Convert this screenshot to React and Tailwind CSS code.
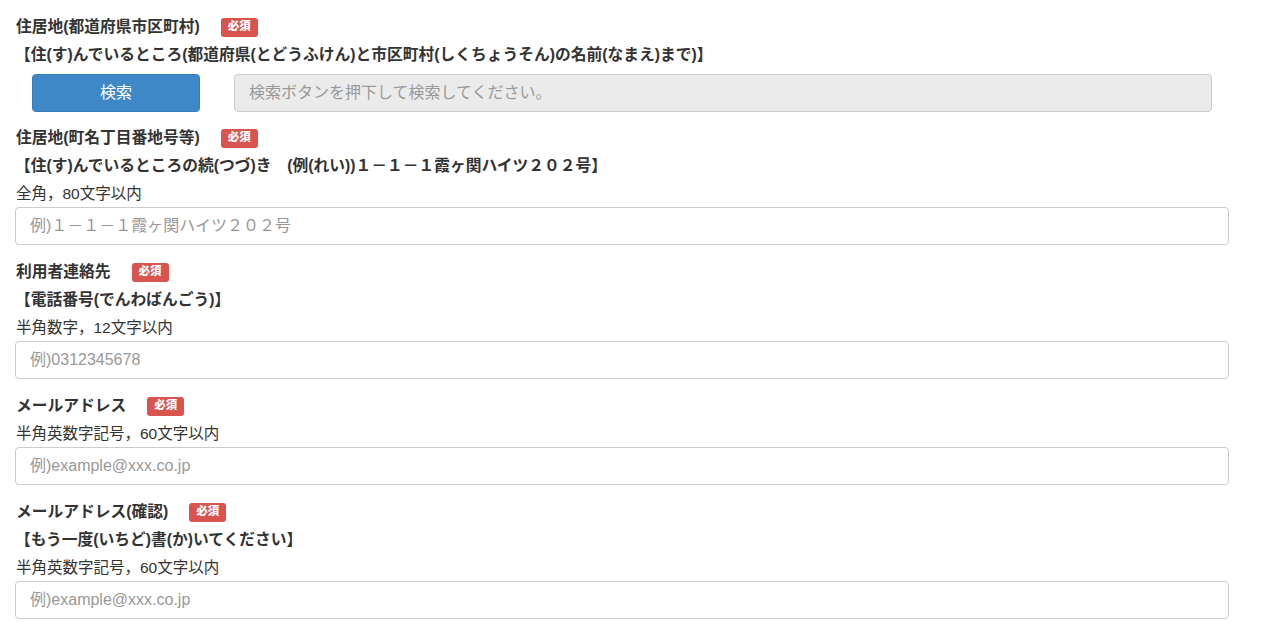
import React from 'react';

// 入力フォーム（住所・連絡先）
const font = { fontFamily: '"Liberation Sans", "Noto Sans CJK JP", sans-serif' };

const Badge = () => (
    <span className="ml-[21px] inline-flex h-[19px] w-[37px] items-center justify-center rounded-[3px] bg-[#d9534f] text-[11.5px] font-black leading-none text-white">
        必須
    </span>
);

const Label = ({ children }) => (
    <div className="flex h-7 items-center pl-px">
        <span className="text-[15.75px] font-bold text-[#333]">{children}</span>
        <Badge />
    </div>
);

const Note = ({ children }) => (
    <div className="flex h-7 items-center text-[15.75px] font-bold text-[#333]">{children}</div>
);

const Hint = ({ children }) => (
    <div className="flex h-[27px] items-center pl-px text-[15.5px] text-[#333]">{children}</div>
);

const TextInput = ({ placeholder }) => (
    <input
        type="text"
        placeholder={placeholder}
        className="h-[38px] w-[1214px] rounded-[4px] border border-[#cccccc] bg-white px-[14px] text-[16px] text-[#555] placeholder:text-[#999] outline-none"
    />
);

const fields = [
    {
        label: '住居地(町名丁目番地号等)',
        note: '【住(す)んでいるところの続(つづ)き　(例(れい))１－１－１霞ヶ関ハイツ２０２号】',
        hint: '全角，80文字以内',
        placeholder: '例)１－１－１霞ヶ関ハイツ２０２号'
    },
    {
        label: '利用者連絡先',
        note: '【電話番号(でんわばんごう)】',
        hint: '半角数字，12文字以内',
        placeholder: '例)0312345678'
    },
    {
        label: 'メールアドレス',
        hint: '半角英数字記号，60文字以内',
        placeholder: '例)example@xxx.co.jp'
    },
    {
        label: 'メールアドレス(確認)',
        note: '【もう一度(いちど)書(か)いてください】',
        hint: '半角英数字記号，60文字以内',
        placeholder: '例)example@xxx.co.jp'
    }
];

export default function App() {
    return (
        <div className="min-h-screen bg-white px-[15px] pt-[13px]" style={font}>
            {/* 住居地(都道府県市区町村) */}
            <div className="mb-[12px]">
                <Label>住居地(都道府県市区町村)</Label>
                <Note>【住(す)んでいるところ(都道府県(とどうふけん)と市区町村(しくちょうそん)の名前(なまえ)まで)】</Note>
                <div className="mt-[5px] flex items-center gap-[34px] pl-[17px]">
                    <button className="h-[38px] w-[168px] rounded-[4px] border border-[#357ebd] bg-[#3f88c8] text-[16px] text-white">
                        検索
                    </button>
                    <input
                        type="text"
                        disabled
                        placeholder="検索ボタンを押下して検索してください。"
                        className="h-[38px] w-[978px] rounded-[4px] border border-[#cccccc] bg-[#ebebeb] px-[14px] text-[16px] placeholder:text-[#999]"
                    />
                </div>
            </div>

            {fields.map((f) => (
                <div key={f.label} className="mb-[13px]">
                    <Label>{f.label}</Label>
                    {f.note && <Note>{f.note}</Note>}
                    <Hint>{f.hint}</Hint>
                    <TextInput placeholder={f.placeholder} />
                </div>
            ))}
        </div>
    );
}
